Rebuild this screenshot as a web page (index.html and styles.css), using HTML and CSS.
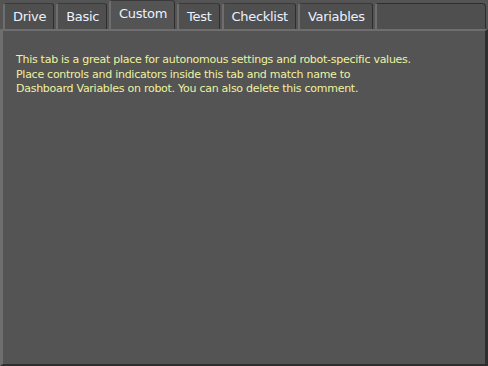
FILE: index.html
```html
<!DOCTYPE html>
<html lang="en">
<head>
  <meta charset="UTF-8">
  <title>Dashboard Tabs</title>
  <link rel="stylesheet" href="styles.css">
</head>
<body>
  <div class="frame">
    <nav class="tabs">
      <div class="tab">Drive</div>
      <div class="tab">Basic</div>
      <div class="tab active">Custom</div>
      <div class="tab">Test</div>
      <div class="tab">Checklist</div>
      <div class="tab">Variables</div>
      <div class="tab-rest"></div>
    </nav>
    <main class="panel">
      <p class="note">This tab is a great place for autonomous settings and robot-specific values.<br>
      Place controls and indicators inside this tab and match name to<br>
      Dashboard Variables on robot. You can also delete this comment.</p>
    </main>
  </div>
</body>
</html>
```

FILE: styles.css
```css
:root {
  --clr-bg: #545454;
  --clr-tab: #4f4f4f;
  --clr-light: #6e6e6e;
  --clr-dark: #2e2e2e;
  --clr-tab-text: #eaf2ff;
  --clr-note: #eef2a0;
}
*, *::before, *::after {box-sizing: border-box; margin: 0}
body {
  background: var(--clr-bg);
  font-family: 'DejaVu Sans', sans-serif;
}
.frame {
  width: 488px;
  height: 366px;
  display: flex;
  flex-direction: column;
}
.tabs {
  display: flex;
  align-items: flex-end;
  height: 29px;
  padding-left: 3px;
  padding-right: 2px;
  gap: 2px;
}
.tab {
  height: 26px;
  padding: 0 7px 0 8px;
  display: flex;
  align-items: center;
  font-size: 13px;
  letter-spacing: -0.3px;
  color: var(--clr-tab-text);
  background: var(--clr-tab);
  border: 1px solid var(--clr-dark);
  border-bottom: none;
  border-top-color: #3a3a3a;
  border-left: 2px solid var(--clr-light);
  border-radius: 3px 3px 0 0;
}
.tab.active {
  height: 29px;
  background: var(--clr-bg);
  padding-bottom: 4px;
}
.tab-rest {
  flex: 1;
  height: 26px;
  background: var(--clr-tab);
  border: 1px solid var(--clr-dark);
  border-bottom: none;
  border-left: 2px solid var(--clr-light);
  border-radius: 3px 4px 0 0;
}
.panel {
  flex: 1;
  border-top: 2px solid var(--clr-light);
  border-left: 3px solid var(--clr-light);
  border-right: 3px solid var(--clr-dark);
  border-bottom: 2px solid var(--clr-dark);
  padding: 22px 13px;
}
.note {
  font-size: 11px;
  letter-spacing: -0.27px;
  line-height: 14.5px;
  color: var(--clr-note);
}
```
